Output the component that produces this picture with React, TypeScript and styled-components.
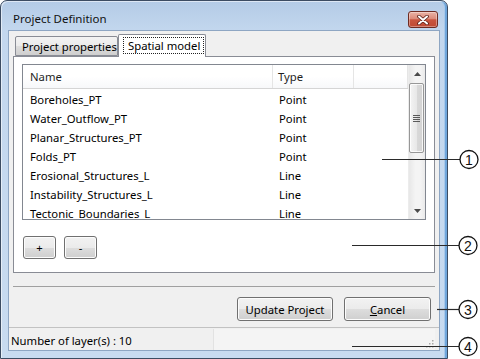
import styled, { createGlobalStyle } from "styled-components";

const GlobalStyle = createGlobalStyle`
  html, body {
    margin: 0;
    padding: 0;
    background: #fff;
  }
  body {
    font-family: "Noto Sans", "Open Sans", sans-serif;
    font-size: 11.3px;
    color: #000;
  }
  * {
    box-sizing: border-box;
  }
`;

const Page = styled.div`
  position: relative;
  width: 480px;
  height: 359px;
  display: flex;
  overflow: hidden;
  background: #fff;
`;

const Window = styled.div`
  width: 448px;
  height: 359px;
  display: flex;
  flex-direction: column;
  border: 1px solid #3c4c62;
  border-radius: 7px 7px 0 0;
  background: linear-gradient(#b4cbe6, #c3d7ee 30px, #c8dbf0);
  box-shadow: inset 1px 1px 0 rgba(255, 255, 255, 0.55),
    inset -2px 0 0 #6fa6dc, inset -3px 0 0 #a9c9ea;
  padding: 0 7px 7px;
`;

const TitleBar = styled.div`
  height: 29px;
  padding-top: 5px;
  display: flex;
  align-items: center;
  justify-content: space-between;
`;

const Title = styled.span`
  padding-left: 5px;
  font-size: 11.5px;
  color: #111;
`;

const CloseButton = styled.div`
  width: 30px;
  height: 17px;
  margin-right: 2px;
  margin-top: 3px;
  border: 1px solid #6e2b22;
  border-radius: 3px;
  background: linear-gradient(
    #eab3a6 0%,
    #dc8b7a 45%,
    #c9553f 52%,
    #c04a34 100%
  );
  box-shadow: inset 0 0 0 1px rgba(255, 255, 255, 0.35);
  display: flex;
  align-items: center;
  justify-content: center;
`;

const Client = styled.div`
  flex: 1;
  display: flex;
  flex-direction: column;
  background: #f0f0f0;
  border: 1px solid #8ea6c3;
`;

const TabStrip = styled.div`
  height: 25px;
  padding: 3px 4px 0;
  display: flex;
  align-items: flex-end;
`;

const Tab = styled.div<{ $active?: boolean; $width: number; $first?: boolean }>`
  width: ${({ $width }) => $width}px;
  height: ${({ $active }) => ($active ? "23px" : "20px")};
  margin-left: ${({ $first }) => ($first ? "2px" : "0")};
  margin-bottom: ${({ $active }) => ($active ? "-1px" : "0")};
  position: relative;
  z-index: ${({ $active }) => ($active ? 2 : 1)};
  border: 1px solid #898c95;
  border-bottom: ${({ $active }) => ($active ? "none" : "1px solid #898c95")};
  border-radius: 2px 2px 0 0;
  background: ${({ $active }) =>
    $active ? "#fff" : "linear-gradient(#f3f3f3, #ebebeb 50%, #dddddd 51%, #cfcfcf)"};
  display: flex;
  align-items: ${({ $active }) => ($active ? "flex-start" : "center")};
  padding: ${({ $active }) => ($active ? "2px 0 0 4px" : "0 0 0 6px")};
  white-space: nowrap;
`;

const FocusLabel = styled.span`
  border: 1px dotted #222;
  padding: 0 3px 0 4px;
  line-height: 15px;
`;

const Panel = styled.div`
  height: 217px;
  margin: 0 4px;
  border: 1px solid #898c95;
  background: #fff;
  padding: 7px 8px;
  display: flex;
  flex-direction: column;
`;

const ListBox = styled.div`
  height: 156px;
  border: 1px solid #828790;
  display: flex;
  overflow: hidden;
`;

const ListBody = styled.div`
  flex: 1;
  display: flex;
  flex-direction: column;
  overflow: hidden;
`;

const HeaderRow = styled.div`
  height: 24px;
  flex-shrink: 0;
  display: flex;
  border-bottom: 1px solid #d5d5d5;
  background: linear-gradient(#ffffff, #ffffff 50%, #f7f8fa);
`;

const HeaderCell = styled.div<{ $width?: number }>`
  width: ${({ $width }) => ($width ? `${$width}px` : "auto")};
  flex: ${({ $width }) => ($width ? "none" : "1")};
  border-right: 1px solid #e5e5e5;
  padding-left: ${({ $width }) => ($width === 250 ? "7px" : "5px")};
  display: flex;
  align-items: center;
  color: #1e1e1e;
`;

const Rows = styled.div`
  padding-top: 1px;
`;

const Row = styled.div`
  height: 19px;
  display: flex;
  align-items: center;
  white-space: nowrap;
`;

const Cell = styled.div<{ $width: number; $pad: number }>`
  width: ${({ $width }) => $width}px;
  padding-left: ${({ $pad }) => $pad}px;
`;

const ScrollBar = styled.div`
  width: 17px;
  display: flex;
  flex-direction: column;
  background: linear-gradient(to right, #e7e7e7, #f4f4f4 40%, #f4f4f4 70%, #eaeaea);
  border-left: 1px solid #ececec;
`;

const ScrollArrow = styled.div`
  height: 17px;
  display: flex;
  align-items: center;
  justify-content: center;
`;

const Thumb = styled.div`
  height: 70px;
  margin: 1px 1px 0 0;
  border: 1px solid #979797;
  border-radius: 2px;
  background: linear-gradient(to right, #f4f4f4, #e8e8e8 50%, #d9d9d9 51%, #d3d3d3);
  box-shadow: inset 0 0 0 1px rgba(255, 255, 255, 0.8);
  display: flex;
  align-items: center;
  justify-content: center;
`;

const Track = styled.div`
  flex: 1;
`;

const SmallButtons = styled.div`
  margin-top: 16px;
  padding-left: 1px;
  display: flex;
  gap: 8px;
`;

const PushButton = styled.button<{ $width: number; $height?: number }>`
  width: ${({ $width }) => $width}px;
  height: ${({ $height }) => $height ?? 24}px;
  border: 1px solid #707070;
  border-radius: 3px;
  background: linear-gradient(#f2f2f2, #ebebeb 50%, #dddddd 51%, #cfcfcf);
  box-shadow: inset 0 0 0 1px #fcfcfc;
  font-family: "Noto Sans", "Open Sans", sans-serif;
  font-size: 11.3px;
  color: #000;
  padding: 0;
  display: flex;
  align-items: center;
  justify-content: center;
`;

const Separator = styled.div`
  margin: 13px 4px 0;
  height: 1px;
  background: #a0a0a0;
`;

const ActionRow = styled.div`
  margin-top: 10px;
  padding-right: 8px;
  display: flex;
  justify-content: flex-end;
  gap: 11px;
`;

const StatusBar = styled.div`
  margin-top: 6px;
  flex: 1;
  display: flex;
  border-top: 1px solid #c2c2c2;
  background: #f0f0f0;
`;

const StatusText = styled.div`
  width: 204px;
  padding-left: 2px;
  display: flex;
  align-items: center;
  padding-top: 2px;
`;

const StatusFill = styled.div`
  flex: 1;
  margin: 1px 4px 0 0;
  background: #f4f4f4;
  border-left: 1px solid #e2e2e2;
  display: flex;
  align-items: flex-end;
  justify-content: flex-end;
  padding: 0 1px 2px 0;
`;

const Callouts = styled.svg`
  position: absolute;
  left: 0;
  top: 0;
  pointer-events: none;
`;

const layers = [
  { name: "Boreholes_PT", type: "Point" },
  { name: "Water_Outflow_PT", type: "Point" },
  { name: "Planar_Structures_PT", type: "Point" },
  { name: "Folds_PT", type: "Point" },
  { name: "Erosional_Structures_L", type: "Line" },
  { name: "Instability_Structures_L", type: "Line" },
  { name: "Tectonic_Boundaries_L", type: "Line" },
];

const callouts = [
  { n: "1", x1: 382, y: 159, cx: 469 },
  { n: "2", x1: 352, y: 245, cx: 468 },
  { n: "3", x1: 437, y: 309, cx: 468 },
  { n: "4", x1: 352, y: 346, cx: 468 },
];

export default function App() {
  return (
    <>
      <GlobalStyle />
      <Page>
        <Window>
          <TitleBar>
            <Title>Project Definition</Title>
            <CloseButton>
              <svg width="12" height="10" viewBox="0 0 12 10">
                <path d="M2 1.5 L10 8.5 M10 1.5 L2 8.5" stroke="#5b1e16" strokeWidth="3.6" strokeLinecap="round" />
                <path d="M2 1.5 L10 8.5 M10 1.5 L2 8.5" stroke="#fff" strokeWidth="2" strokeLinecap="round" />
              </svg>
            </CloseButton>
          </TitleBar>
          <Client>
            <TabStrip>
              <Tab $width={103} $first>
                Project properties
              </Tab>
              <Tab $width={88} $active>
                <FocusLabel>Spatial model</FocusLabel>
              </Tab>
            </TabStrip>
            <Panel>
              <ListBox>
                <ListBody>
                  <HeaderRow>
                    <HeaderCell $width={250}>Name</HeaderCell>
                    <HeaderCell $width={81}>Type</HeaderCell>
                    <HeaderCell />
                  </HeaderRow>
                  <Rows>
                    {layers.map((l) => (
                      <Row key={l.name}>
                        <Cell $width={250} $pad={7}>
                          {l.name}
                        </Cell>
                        <Cell $width={81} $pad={6}>
                          {l.type}
                        </Cell>
                      </Row>
                    ))}
                  </Rows>
                </ListBody>
                <ScrollBar>
                  <ScrollArrow>
                    <svg width="7" height="4" viewBox="0 0 7 4">
                      <path d="M0 4 L3.5 0 L7 4 Z" fill="#4a4a4a" />
                    </svg>
                  </ScrollArrow>
                  <Thumb>
                    <svg width="7" height="9" viewBox="0 0 7 9">
                      <path d="M0 1.5 H7 M0 3.5 H7 M0 5.5 H7 M0 7.5 H7" stroke="#5a5a5a" strokeWidth="1" />
                    </svg>
                  </Thumb>
                  <Track />
                  <ScrollArrow>
                    <svg width="7" height="4" viewBox="0 0 7 4">
                      <path d="M0 0 L3.5 4 L7 0 Z" fill="#4a4a4a" />
                    </svg>
                  </ScrollArrow>
                </ScrollBar>
              </ListBox>
              <SmallButtons>
                <PushButton $width={33} $height={23}>+</PushButton>
                <PushButton $width={33} $height={23}>-</PushButton>
              </SmallButtons>
            </Panel>
            <Separator />
            <ActionRow>
              <PushButton $width={96}>Update Project</PushButton>
              <PushButton $width={87}>
                <span>
                  <u>C</u>ancel
                </span>
              </PushButton>
            </ActionRow>
            <StatusBar>
              <StatusText>Number of layer(s) : 10</StatusText>
              <StatusFill>
                <svg width="9" height="9" viewBox="0 0 9 9">
                  {[
                    [7, 1],
                    [7, 4],
                    [4, 4],
                    [7, 7],
                    [4, 7],
                    [1, 7],
                  ].map(([x, y]) => (
                    <rect key={`${x}-${y}`} x={x} y={y} width="1.5" height="1.5" fill="#a8a8a8" />
                  ))}
                </svg>
              </StatusFill>
            </StatusBar>
          </Client>
        </Window>
        <Callouts width="480" height="359" viewBox="0 0 480 359">
          {callouts.map((c) => (
            <g key={c.n}>
              <line x1={c.x1} y1={c.y + 0.5} x2={c.cx - 9} y2={c.y + 0.5} stroke="#2a2a2a" strokeWidth="1.2" />
              <circle cx={c.cx} cy={c.y + 0.5} r="9" fill="#fff" stroke="#111" strokeWidth="1.3" />
              <text
                x={c.cx}
                y={c.y + 5.5}
                textAnchor="middle"
                fontFamily="Liberation Sans, Arial, sans-serif"
                fontSize="14"
                fill="#111"
              >
                {c.n}
              </text>
            </g>
          ))}
        </Callouts>
      </Page>
    </>
  );
}
